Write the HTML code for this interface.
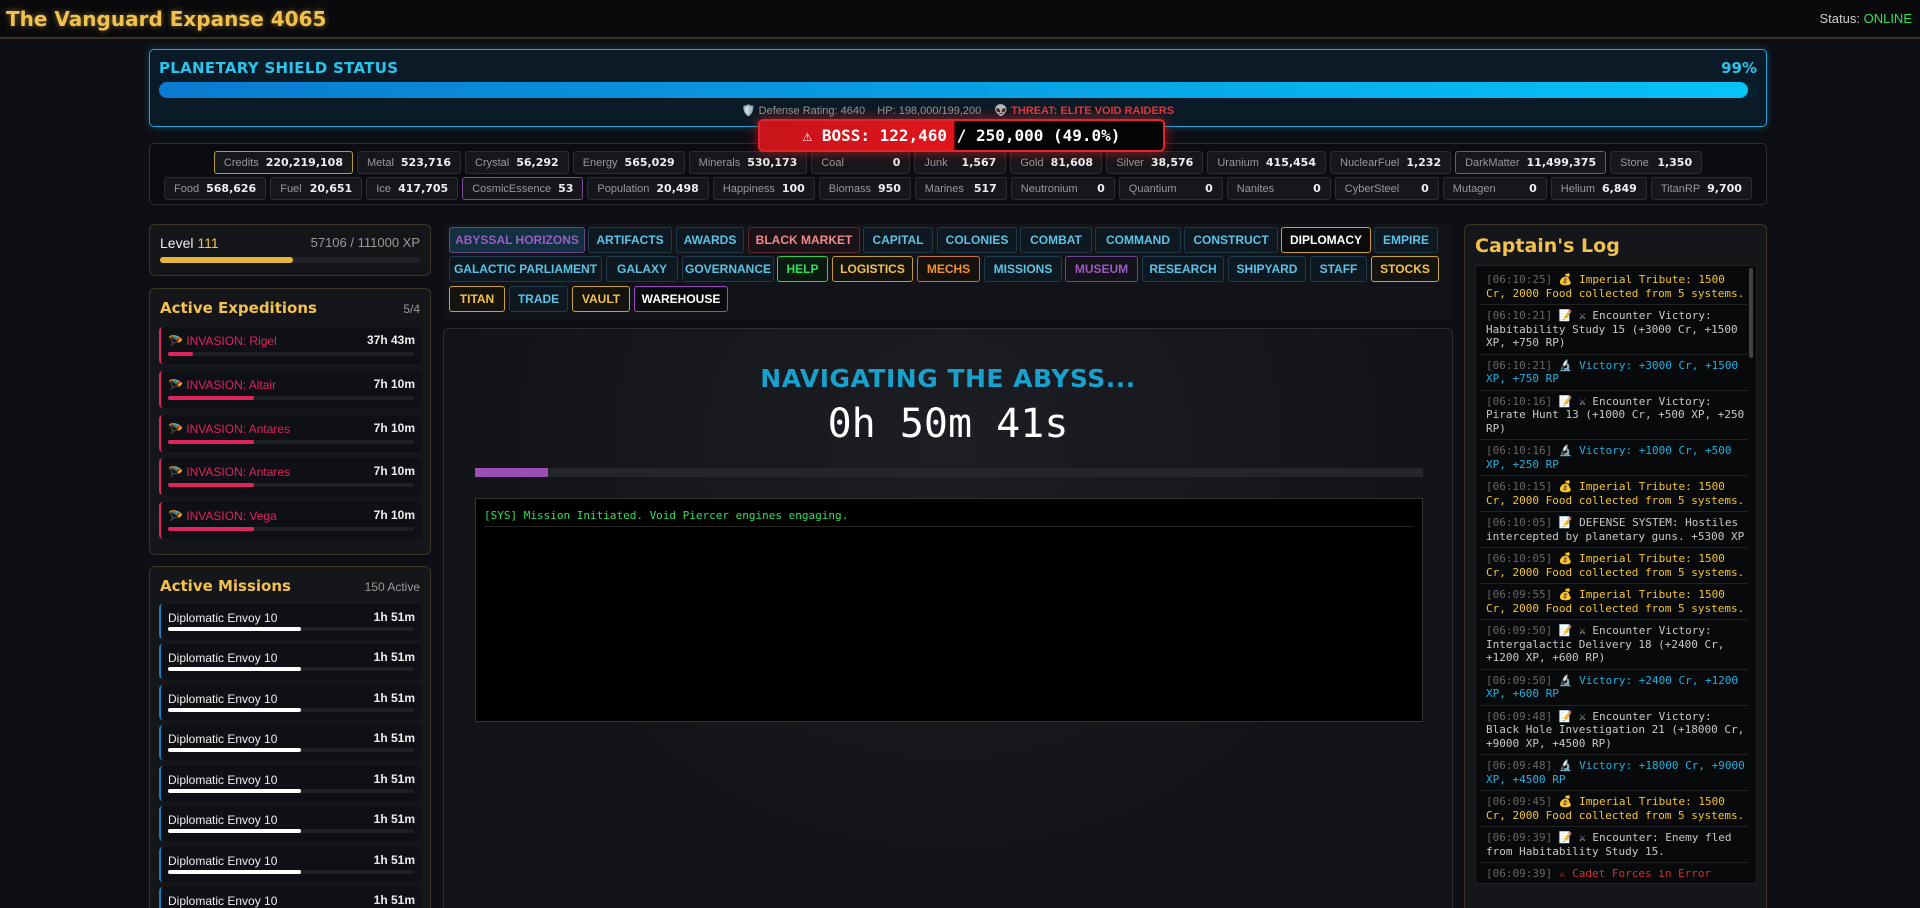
<!DOCTYPE html>
<html><head><meta charset="utf-8"><style>
*{box-sizing:border-box;margin:0;padding:0}
html,body{width:1920px;height:908px;overflow:hidden}
body{background:#0d0f14;font-family:"Liberation Sans","DejaVu Sans",sans-serif;color:#ddd;position:relative}
.orb{font-family:"DejaVu Sans","Liberation Sans",sans-serif;font-weight:bold}
#hdr{position:absolute;left:0;top:0;width:1920px;height:39px;background:#0a0a0c;border-bottom:2px solid #3a3220}
#hdr .t{position:absolute;left:6px;top:7px;font-size:20px;color:#f2c14e;text-shadow:0 0 6px rgba(242,193,78,.5)}
#hdr .s{position:absolute;right:8px;top:11px;font-size:13px;color:#ccc}
#shield{position:absolute;left:149px;top:49px;width:1618px;height:78px;border:1px solid #1fa3d6;border-radius:5px;background:#0a1a26;box-shadow:0 0 8px rgba(31,163,214,.35)}
#shield .h{position:absolute;left:9px;top:9px;font-size:15px;color:#2bc4ee;letter-spacing:.3px}
#shield .p{position:absolute;right:9px;top:9px;font-size:15px;color:#2bc4ee}
#shield .bar{position:absolute;left:9px;top:32px;width:1599px;height:16px;border-radius:8px;background:#06202e}
#shield .fill{width:99.4%;height:100%;border-radius:8px;background:linear-gradient(90deg,#0a7bd0,#06c3f7)}
#shield .inf{position:absolute;left:0;right:0;top:54px;text-align:center;font-size:11px;color:#999}
#shield .inf b{color:#e0383e;margin-left:10px}
#boss{position:absolute;left:758px;top:119px;width:407px;height:33px;border:2px solid #e0262a;border-radius:5px;background:linear-gradient(90deg,#c7141a 0%,#e0161c 48%,#050505 48.5%,#050505 100%);box-shadow:0 0 12px rgba(255,30,30,.6);font-family:"DejaVu Sans Mono","Liberation Mono",monospace;font-weight:bold;font-size:16px;color:#fff;text-align:center;line-height:29px}
#res{position:absolute;left:149px;top:143px;width:1618px;height:62px;border:1px solid #2a2d33;border-radius:5px;background:#0b0c10}
.row{position:absolute;left:0;right:0;display:flex;justify-content:center;gap:4px}
.c{height:23px;border:1px solid #2a2d33;border-radius:3px;background:#15171c;padding:0 9px;font-size:11px;color:#999;display:flex;align-items:center;gap:7px}
.c b{color:#eee;font-size:11px;font-family:"DejaVu Sans","Liberation Sans",sans-serif;margin-left:auto}
.c.g{border-color:#b99a35}.c.v{border-color:#7b4a9a}
.panel{position:absolute;border:1px solid #3a3524;border-radius:6px;background:#15161a}
.ptitle{position:absolute;left:10px;font-size:15px;color:#f2c14e}
.item{position:absolute;left:9px;width:262px;border-radius:4px;background:#0e1015;border-left:2px solid #e0245e}
.item .n{position:absolute;left:7px;top:7px;font-size:12px;color:#e0245e}
.item .tm{position:absolute;right:6px;top:6px;font-size:12px;color:#eee;font-weight:bold}
.item .b{position:absolute;left:7px;right:7px;bottom:8px;height:4px;background:#1e2026;border-radius:2px}
.item .b i{display:block;height:100%;background:#e0245e;border-radius:2px}
.mi{border-left-color:#1c7fc0}
.mi .n{color:#eee}
.mi .b i{background:#fff}
#nav{position:absolute;left:443px;top:224px;width:1010px;height:96px;border-radius:6px;background:#111318}
.nb{position:absolute;height:26px;border:1px solid #1f3a4a;border-radius:3px;background:#0d1820;color:#5cc3e6;font-weight:bold;font-size:12px;line-height:24px;text-align:center;white-space:nowrap}
#main{position:absolute;left:443px;top:328px;width:1010px;height:590px;border:1px solid #2c2e33;border-radius:6px;background:radial-gradient(ellipse at 50% 20%,#1c1e24,#121317 70%)}
#main .tt{position:absolute;left:0;right:0;top:35px;text-align:center;font-size:25px;color:#1aa0cc;letter-spacing:.5px}
#main .tm{position:absolute;left:0;right:0;top:72px;text-align:center;font-family:"DejaVu Sans Mono","Liberation Mono",monospace;font-size:40px;color:#fff}
#main .pb{position:absolute;left:31px;top:139px;width:948px;height:9px;background:#24262b}
#main .pb i{display:block;width:73px;height:100%;background:#9b4fb5}
#term{position:absolute;left:31px;top:169px;width:948px;height:224px;background:#000;border:1px solid #333}
#term div{margin:10px 8px 0;padding-bottom:4px;border-bottom:1px solid #222;font-family:"DejaVu Sans Mono","Liberation Mono",monospace;font-size:11px;color:#2ee05a}
#logp{position:absolute;left:1464px;top:224px;width:303px;height:700px}
#log{position:absolute;left:10px;top:40px;width:282px;height:619px;background:#08090b;border:1px solid #222;overflow:hidden;padding:3px 8px 0 4px}
.e{font-family:"DejaVu Sans Mono","Liberation Mono",monospace;font-size:11px;line-height:13.5px;white-space:pre;padding:4px 0 4px 6px;border-bottom:1px solid #232323;color:#c8c8c8}
.e s{text-decoration:none;color:#666}
.y{color:#f4c430}.bl{color:#1fb0e0}.rd{color:#d03030}
#sb{position:absolute;right:3px;top:2px;width:4px;height:90px;background:#444;border-radius:2px}
</style></head><body>
<div id="hdr"><div class="t orb">The Vanguard Expanse 4065</div><div class="s">Status: <span style="color:#2ee05a">ONLINE</span></div></div>

<div id="shield"><div class="h orb">PLANETARY SHIELD STATUS</div><div class="p orb">99%</div>
<div class="bar"><div class="fill"></div></div>
<div class="inf">🛡️ Defense Rating: 4640 &nbsp;&nbsp; HP: 198,000/199,200 <b>👽 THREAT: ELITE VOID RAIDERS</b></div></div>

<div id="res">
<div class="row" style="top:7px">
<div class="c g">Credits<b>220,219,108</b></div><div class="c">Metal<b>523,716</b></div><div class="c">Crystal<b>56,292</b></div><div class="c">Energy<b>565,029</b></div><div class="c">Minerals<b>530,173</b></div><div class="c" style="width:99px">Coal<b>0</b></div><div class="c" style="width:92px">Junk<b>1,567</b></div><div class="c" style="width:92px">Gold<b>81,608</b></div><div class="c">Silver<b>38,576</b></div><div class="c">Uranium<b>415,454</b></div><div class="c">NuclearFuel<b>1,232</b></div><div class="c v">DarkMatter<b>11,499,375</b></div><div class="c" style="width:92px">Stone<b>1,350</b></div>
</div>
<div class="row" style="top:33px">
<div class="c">Food<b>568,626</b></div><div class="c" style="width:92px">Fuel<b>20,651</b></div><div class="c" style="width:92px">Ice<b>417,705</b></div><div class="c v">CosmicEssence<b>53</b></div><div class="c">Population<b>20,498</b></div><div class="c">Happiness<b>100</b></div><div class="c" style="width:92px">Biomass<b>950</b></div><div class="c" style="width:92px">Marines<b>517</b></div><div class="c" style="width:104px">Neutronium<b>0</b></div><div class="c" style="width:104px">Quantium<b>0</b></div><div class="c" style="width:104px">Nanites<b>0</b></div><div class="c" style="width:104px">CyberSteel<b>0</b></div><div class="c" style="width:104px">Mutagen<b>0</b></div><div class="c">Helium<b>6,849</b></div><div class="c">TitanRP<b>9,700</b></div>
</div></div>

<div class="panel" style="left:149px;top:224px;width:282px;height:52px">
<div style="position:absolute;left:10px;top:10px;font-size:14px;color:#eee">Level <span style="color:#f2c14e">111</span></div>
<div style="position:absolute;right:10px;top:10px;font-size:13px;color:#999">57106 / 111000 XP</div>
<div style="position:absolute;left:10px;top:32px;width:261px;height:6px;background:#202227;border-radius:3px"><div style="width:51%;height:100%;background:#e8b53c;border-radius:3px"></div></div></div>

<div class="panel" style="left:149px;top:288px;width:282px;height:267px">
<div class="ptitle orb" style="top:10px">Active Expeditions</div><div style="position:absolute;right:10px;top:13px;font-size:12px;color:#999">5/4</div>
<div class="item" style="top:38px;height:37px"><div class="n">🪂 INVASION: Rigel</div><div class="tm">37h 43m</div><div class="b"><i style="width:10%"></i></div></div>
<div class="item" style="top:82px;height:37px"><div class="n">🪂 INVASION: Altair</div><div class="tm">7h 10m</div><div class="b"><i style="width:35%"></i></div></div>
<div class="item" style="top:126px;height:37px"><div class="n">🪂 INVASION: Antares</div><div class="tm">7h 10m</div><div class="b"><i style="width:35%"></i></div></div>
<div class="item" style="top:169px;height:37px"><div class="n">🪂 INVASION: Antares</div><div class="tm">7h 10m</div><div class="b"><i style="width:35%"></i></div></div>
<div class="item" style="top:213px;height:37px"><div class="n">🪂 INVASION: Vega</div><div class="tm">7h 10m</div><div class="b"><i style="width:35%"></i></div></div>
</div>

<div class="panel" style="left:149px;top:566px;width:282px;height:360px">
<div class="ptitle orb" style="top:10px">Active Missions</div><div style="position:absolute;right:10px;top:13px;font-size:12px;color:#999">150 Active</div>
<div class="item mi" style="top:37px;height:35px"><div class="n">Diplomatic Envoy 10</div><div class="tm">1h 51m</div><div class="b"><i style="width:54%"></i></div></div>
<div class="item mi" style="top:77px;height:35px"><div class="n">Diplomatic Envoy 10</div><div class="tm">1h 51m</div><div class="b"><i style="width:54%"></i></div></div>
<div class="item mi" style="top:118px;height:35px"><div class="n">Diplomatic Envoy 10</div><div class="tm">1h 51m</div><div class="b"><i style="width:54%"></i></div></div>
<div class="item mi" style="top:158px;height:35px"><div class="n">Diplomatic Envoy 10</div><div class="tm">1h 51m</div><div class="b"><i style="width:54%"></i></div></div>
<div class="item mi" style="top:199px;height:35px"><div class="n">Diplomatic Envoy 10</div><div class="tm">1h 51m</div><div class="b"><i style="width:54%"></i></div></div>
<div class="item mi" style="top:239px;height:35px"><div class="n">Diplomatic Envoy 10</div><div class="tm">1h 51m</div><div class="b"><i style="width:54%"></i></div></div>
<div class="item mi" style="top:280px;height:35px"><div class="n">Diplomatic Envoy 10</div><div class="tm">1h 51m</div><div class="b"><i style="width:54%"></i></div></div>
<div class="item mi" style="top:320px;height:35px"><div class="n">Diplomatic Envoy 10</div><div class="tm">1h 51m</div><div class="b"><i style="width:54%"></i></div></div>
</div>

<div id="nav">
<div class="nb" style="left:6px;top:3px;width:136px;border-color:#6a4a8a;background:#123040;color:#9a5cc0">ABYSSAL HORIZONS</div>
<div class="nb" style="left:145px;top:3px;width:84px">ARTIFACTS</div>
<div class="nb" style="left:233px;top:3px;width:68px">AWARDS</div>
<div class="nb" style="left:305px;top:3px;width:112px;border-color:#5a2a30;background:#1a1216;color:#f08a8a">BLACK MARKET</div>
<div class="nb" style="left:420px;top:3px;width:70px">CAPITAL</div>
<div class="nb" style="left:494px;top:3px;width:80px">COLONIES</div>
<div class="nb" style="left:577px;top:3px;width:72px">COMBAT</div>
<div class="nb" style="left:652px;top:3px;width:86px">COMMAND</div>
<div class="nb" style="left:741px;top:3px;width:94px">CONSTRUCT</div>
<div class="nb" style="left:838px;top:3px;width:90px;border-color:#c9a23a;background:#0b0b0e;color:#fff">DIPLOMACY</div>
<div class="nb" style="left:931px;top:3px;width:64px">EMPIRE</div>
<div class="nb" style="left:6px;top:32px;width:153px">GALACTIC PARLIAMENT</div>
<div class="nb" style="left:163px;top:32px;width:72px">GALAXY</div>
<div class="nb" style="left:239px;top:32px;width:92px">GOVERNANCE</div>
<div class="nb" style="left:334px;top:32px;width:51px;border-color:#2ed05a;background:#0a1a10;color:#2ee05a">HELP</div>
<div class="nb" style="left:389px;top:32px;width:81px;border-color:#c09a3a;background:#14130e;color:#f2c14e">LOGISTICS</div>
<div class="nb" style="left:474px;top:32px;width:63px;border-color:#c0743a;background:#16110c;color:#f0943a">MECHS</div>
<div class="nb" style="left:541px;top:32px;width:78px">MISSIONS</div>
<div class="nb" style="left:622px;top:32px;width:73px;border-color:#6a4a8a;background:#14121a;color:#9a5cc0">MUSEUM</div>
<div class="nb" style="left:699px;top:32px;width:82px">RESEARCH</div>
<div class="nb" style="left:785px;top:32px;width:78px">SHIPYARD</div>
<div class="nb" style="left:867px;top:32px;width:57px">STAFF</div>
<div class="nb" style="left:928px;top:32px;width:68px;border-color:#c9a23a;background:#14130e;color:#f2c14e">STOCKS</div>
<div class="nb" style="left:6px;top:62px;width:56px;border-color:#c9a23a;background:#14130e;color:#f2c14e">TITAN</div>
<div class="nb" style="left:66px;top:62px;width:59px">TRADE</div>
<div class="nb" style="left:129px;top:62px;width:58px;border-color:#c9a23a;background:#14130e;color:#f2c14e">VAULT</div>
<div class="nb" style="left:191px;top:62px;width:94px;border-color:#9a4ac0;background:#0b0b0e;color:#fff">WAREHOUSE</div>
</div>

<div id="main">
<div class="tt orb">NAVIGATING THE ABYSS...</div>
<div class="tm">0h 50m 41s</div>
<div class="pb"><i></i></div>
<div id="term"><div>[SYS] Mission Initiated. Void Piercer engines engaging.</div></div>
</div>

<div id="boss">⚠ BOSS: 122,460 / 250,000 (49.0%)</div>

<div id="logp" class="panel">
<div class="ptitle orb" style="top:10px;font-size:19px">Captain's Log</div>
<div id="log"><div id="sb"></div>
<div class="e y"><s>[06:10:25]</s> 💰 Imperial Tribute: 1500
Cr, 2000 Food collected from 5 systems.</div>
<div class="e"><s>[06:10:21]</s> 📝 ⚔ Encounter Victory:
Habitability Study 15 (+3000 Cr, +1500
XP, +750 RP)</div>
<div class="e bl"><s>[06:10:21]</s> 🔬 Victory: +3000 Cr, +1500
XP, +750 RP</div>
<div class="e"><s>[06:10:16]</s> 📝 ⚔ Encounter Victory:
Pirate Hunt 13 (+1000 Cr, +500 XP, +250
RP)</div>
<div class="e bl"><s>[06:10:16]</s> 🔬 Victory: +1000 Cr, +500
XP, +250 RP</div>
<div class="e y"><s>[06:10:15]</s> 💰 Imperial Tribute: 1500
Cr, 2000 Food collected from 5 systems.</div>
<div class="e"><s>[06:10:05]</s> 📝 DEFENSE SYSTEM: Hostiles
intercepted by planetary guns. +5300 XP</div>
<div class="e y"><s>[06:10:05]</s> 💰 Imperial Tribute: 1500
Cr, 2000 Food collected from 5 systems.</div>
<div class="e y"><s>[06:09:55]</s> 💰 Imperial Tribute: 1500
Cr, 2000 Food collected from 5 systems.</div>
<div class="e"><s>[06:09:50]</s> 📝 ⚔ Encounter Victory:
Intergalactic Delivery 18 (+2400 Cr,
+1200 XP, +600 RP)</div>
<div class="e bl"><s>[06:09:50]</s> 🔬 Victory: +2400 Cr, +1200
XP, +600 RP</div>
<div class="e"><s>[06:09:48]</s> 📝 ⚔ Encounter Victory:
Black Hole Investigation 21 (+18000 Cr,
+9000 XP, +4500 RP)</div>
<div class="e bl"><s>[06:09:48]</s> 🔬 Victory: +18000 Cr, +9000
XP, +4500 RP</div>
<div class="e y"><s>[06:09:45]</s> 💰 Imperial Tribute: 1500
Cr, 2000 Food collected from 5 systems.</div>
<div class="e"><s>[06:09:39]</s> 📝 ⚔ Encounter: Enemy fled
from Habitability Study 15.</div>
<div class="e rd"><s>[06:09:39]</s> ⚔ Cadet Forces in Error</div>
</div></div>
</body></html>
